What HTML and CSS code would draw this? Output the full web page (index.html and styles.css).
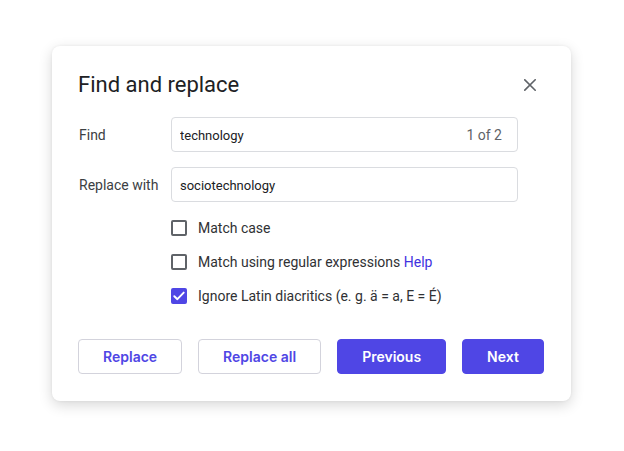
FILE: index.html
```html
<!DOCTYPE html>
<html lang="en">
<head>
<meta charset="utf-8">
<title>Find and replace</title>
<link rel="stylesheet" href="styles.css">
</head>
<body>
<div class="stage">
  <div class="dialog" role="dialog" aria-labelledby="dlg-title">
    <div class="header">
      <h1 class="title" id="dlg-title">Find and replace</h1>
      <button class="close" aria-label="Close">
        <svg width="12" height="12" viewBox="0 0 12 12" aria-hidden="true">
          <path d="M0.8 0.8 L11.2 11.2 M11.2 0.8 L0.8 11.2" stroke="#5f6368" stroke-width="1.6" stroke-linecap="square" fill="none"/>
        </svg>
      </button>
    </div>
    <div class="fields">
      <label class="label" for="find">Find</label>
      <div class="field">
        <input class="input" id="find" type="text" value="technology">
        <span class="count">1 of 2</span>
      </div>
      <label class="label" for="repl">Replace with</label>
      <div class="field">
        <input class="input" id="repl" type="text" value="sociotechnology">
      </div>
    </div>
    <div class="options">
      <label class="option"><span class="box"></span><span>Match case</span></label>
      <label class="option"><span class="box"></span><span>Match using regular expressions <a class="help" href="#">Help</a></span></label>
      <label class="option"><span class="box checked">
        <svg width="12" height="10" viewBox="0 0 12 10" aria-hidden="true"><path d="M1.3 5.2 L4.4 8.2 L10.7 1.6" stroke="#fff" stroke-width="1.9" fill="none" stroke-linecap="round" stroke-linejoin="round"/></svg>
      </span><span>Ignore Latin diacritics (e. g. ä = a, E = É)</span></label>
    </div>
    <div class="actions">
      <button class="btn btn-outline">Replace</button>
      <button class="btn btn-outline">Replace all</button>
      <button class="btn btn-primary">Previous</button>
      <button class="btn btn-primary">Next</button>
    </div>
  </div>
</div>
</body>
</html>
```
FILE: styles.css
```css
* { box-sizing: border-box; }
html, body { margin: 0; padding: 0; background: #ffffff; }
body { font-family: Roboto, "Liberation Sans", Arial, sans-serif; color: #202124; }

.stage { padding: 46px 0 50px 52px; }

.dialog {
  width: 519px;
  background: #ffffff;
  border-radius: 8px;
  box-shadow: 0 4px 14px rgba(0, 0, 0, 0.16), 0 0 3px rgba(0, 0, 0, 0.06);
  padding: 25px 26px 27px 26px;
}

.header {
  display: flex;
  align-items: center;
  justify-content: space-between;
  padding-right: 3px;
}
.title {
  margin: 0;
  font-size: 22px;
  line-height: 28px;
  font-weight: 400;
  color: #202124;
}
.close {
  width: 24px;
  height: 24px;
  border: 0;
  background: transparent;
  padding: 0;
  display: flex;
  align-items: center;
  justify-content: center;
  cursor: pointer;
}

.fields {
  margin-top: 18px;
  display: grid;
  grid-template-columns: 93px 347px;
  row-gap: 15px;
  align-items: center;
}
.label {
  font-size: 14px;
  color: #3c4043;
  padding-left: 1px;
}
.field {
  height: 35px;
  border: 1px solid #dadce0;
  border-radius: 4px;
  display: flex;
  align-items: center;
  padding: 1px 15px 0 8px;
}
.input {
  flex: 1;
  min-width: 0;
  border: 0;
  outline: none;
  padding: 0;
  font-family: Roboto, "Liberation Sans", Arial, sans-serif;
  font-size: 13px;
  color: #202124;
  background: transparent;
}
.count {
  font-size: 14px;
  color: #5f6368;
}

.options {
  margin-top: 16px;
  padding-left: 93px;
  display: flex;
  flex-direction: column;
  gap: 14px;
}
.option {
  display: flex;
  align-items: center;
  gap: 11px;
  height: 20px;
  font-size: 14px;
  color: #303134;
}
.box {
  width: 16px;
  height: 16px;
  border: 2px solid #5f6368;
  border-radius: 2px;
  display: flex;
  align-items: center;
  justify-content: center;
  flex: none;
}
.box.checked {
  background: #4f46e5;
  border-color: #4f46e5;
}
.help {
  color: #3f32e0;
  text-decoration: none;
}

.actions {
  margin-top: 33px;
  display: flex;
  gap: 16px;
}
.btn {
  flex: none;
  height: 35px;
  padding: 0 24px;
  border-radius: 4px;
  font-family: Inter, "Liberation Sans", Arial, sans-serif;
  font-size: 14px;
  font-weight: 600;
  white-space: nowrap;
  cursor: pointer;
}
.btn-outline {
  background: #ffffff;
  border: 1px solid #d3d3dc;
  color: #4f46e5;
}
.btn-primary {
  background: #4f46e5;
  border: 1px solid #4f46e5;
  color: #ffffff;
}
```
